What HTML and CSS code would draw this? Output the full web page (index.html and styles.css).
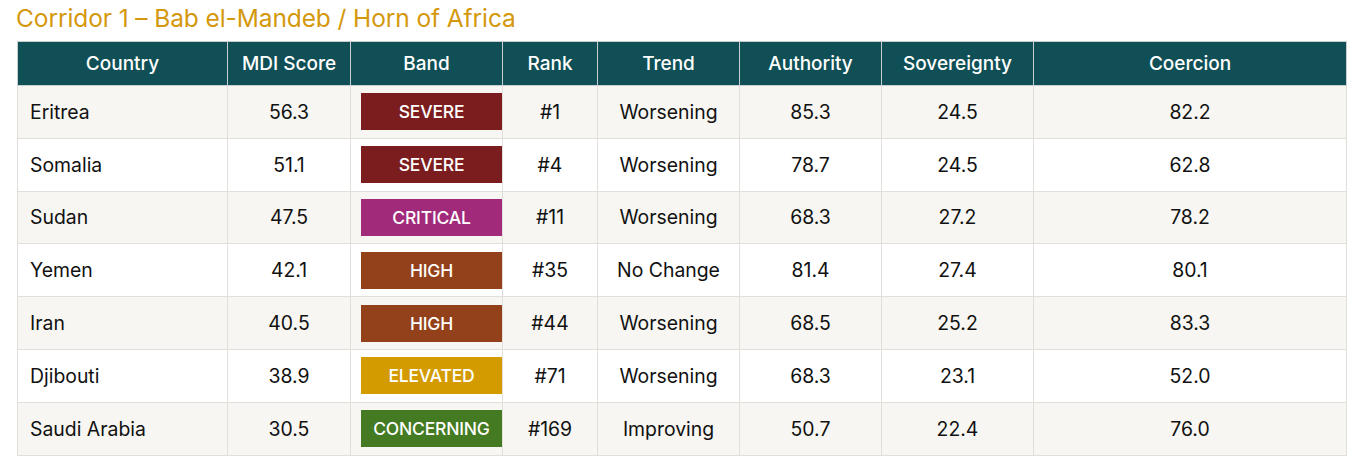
FILE: index.html
```html
<!DOCTYPE html>
<html lang="en">
<head>
<meta charset="utf-8">
<title>Corridor 1 – Bab el-Mandeb / Horn of Africa</title>
<link rel="stylesheet" href="styles.css">
</head>
<body>
<section class="corridor">
  <h2 class="corridor-title">Corridor 1 – Bab el-Mandeb / Horn of Africa</h2>
  <table class="mdi-table">
    <colgroup>
      <col class="c-country"><col class="c-score"><col class="c-band"><col class="c-rank"><col class="c-trend"><col class="c-auth"><col class="c-sov"><col class="c-coer">
    </colgroup>
    <thead>
      <tr><th>Country</th><th>MDI Score</th><th>Band</th><th>Rank</th><th>Trend</th><th>Authority</th><th>Sovereignty</th><th>Coercion</th></tr>
    </thead>
    <tbody>
      <tr><td class="name">Eritrea</td><td>56.3</td><td class="band"><span class="badge severe">SEVERE</span></td><td>#1</td><td>Worsening</td><td>85.3</td><td>24.5</td><td>82.2</td></tr>
      <tr><td class="name">Somalia</td><td>51.1</td><td class="band"><span class="badge severe">SEVERE</span></td><td>#4</td><td>Worsening</td><td>78.7</td><td>24.5</td><td>62.8</td></tr>
      <tr><td class="name">Sudan</td><td>47.5</td><td class="band"><span class="badge critical">CRITICAL</span></td><td>#11</td><td>Worsening</td><td>68.3</td><td>27.2</td><td>78.2</td></tr>
      <tr><td class="name">Yemen</td><td>42.1</td><td class="band"><span class="badge high">HIGH</span></td><td>#35</td><td>No Change</td><td>81.4</td><td>27.4</td><td>80.1</td></tr>
      <tr><td class="name">Iran</td><td>40.5</td><td class="band"><span class="badge high">HIGH</span></td><td>#44</td><td>Worsening</td><td>68.5</td><td>25.2</td><td>83.3</td></tr>
      <tr><td class="name">Djibouti</td><td>38.9</td><td class="band"><span class="badge elevated">ELEVATED</span></td><td>#71</td><td>Worsening</td><td>68.3</td><td>23.1</td><td>52.0</td></tr>
      <tr><td class="name">Saudi Arabia</td><td>30.5</td><td class="band"><span class="badge concerning">CONCERNING</span></td><td>#169</td><td>Improving</td><td>50.7</td><td>22.4</td><td>76.0</td></tr>
    </tbody>
  </table>
</section>
</body>
</html>
```
FILE: styles.css
```css
html, body {
  margin: 0;
  padding: 0;
  background: #ffffff;
}
body {
  font-family: Inter, "Noto Sans", "Liberation Sans", sans-serif;
  color: #111111;
}
.corridor {
  padding: 4px 24px 0 16px;
}
.corridor-title {
  margin: 0 0 8px 0;
  font-size: 24.5px;
  font-weight: 400;
  line-height: 29px;
  letter-spacing: -0.1px;
  color: #d4980c;
}
.mdi-table {
  margin-left: 1px;
  width: 1329px;
  table-layout: fixed;
  border-collapse: collapse;
  font-size: 19.4px;
}
.c-country { width: 210px; }
.c-score { width: 123px; }
.c-band { width: 152px; }
.c-rank { width: 95px; }
.c-trend { width: 142px; }
.c-auth { width: 142px; }
.c-sov { width: 152px; }
.c-coer { width: 313px; }
.mdi-table th {
  background: #0f4f55;
  color: #ffffff;
  font-size: 19px;
  font-weight: 500;
  height: 43px;
  padding: 0 8px;
  border: 1px solid #c9cfcf;
  text-align: center;
  vertical-align: middle;
}
.mdi-table td {
  height: 51.8px;
  padding: 0 12px;
  border: 1px solid #e2dfda;
  text-align: center;
  vertical-align: middle;
}
.mdi-table tbody tr:nth-child(odd) td { background: #f7f6f2; }
.mdi-table tbody tr:nth-child(even) td { background: #ffffff; }
.mdi-table td.name { text-align: left; }
.mdi-table td.band {
  padding: 0 0 0 10px;
}
.badge {
  display: block;
  height: 37px;
  line-height: 37px;
  color: #ffffff;
  font-size: 17.5px;
  font-weight: 500;
  letter-spacing: -0.2px;
  text-align: center;
}
.severe { background: #7b1d1e; }
.critical { background: #a12a7a; }
.high { background: #93411a; }
.elevated { background: #d39b00; }
.concerning { background: #437a22; }
```
